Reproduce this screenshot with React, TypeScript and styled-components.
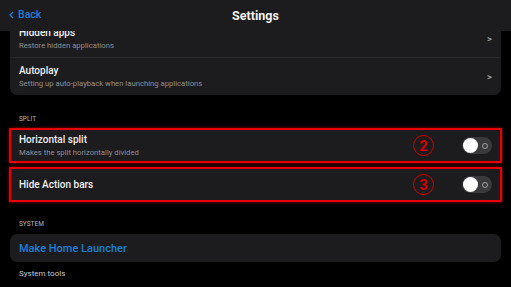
import React from "react";
import styled, { createGlobalStyle } from "styled-components";

const Global = createGlobalStyle`
    html, body {
        margin: 0;
        padding: 0;
        background: #000;
        font-family: Roboto, "Liberation Sans", sans-serif;
        -webkit-font-smoothing: antialiased;
    }
`

const Page = styled.div`
    width: 511px;
    height: 287px;
    overflow: hidden;
    position: relative;
    background: #000;
`

const Header = styled.header`
    position: absolute;
    top: 0;
    left: 0;
    right: 0;
    height: 31px;
    background: #1c1c1e;
    display: flex;
    align-items: center;
    justify-content: center;
    z-index: 2;
`

const Back = styled.span`
    position: absolute;
    left: 9px;
    top: 8px;
    color: #1a7fd8;
    font-size: 10.5px;
    font-weight: 500;
    display: flex;
    align-items: center;
    gap: 4px;
`

const Title = styled.h1`
    margin: 0;
    color: #f2f2f2;
    font-size: 12.5px;
    font-weight: 700;
`

const Content = styled.main`
    padding: 19px 10px 0 10px;
    display: flex;
    flex-direction: column;
`

const Card = styled.section`
    background: #1c1c1e;
    border-radius: 7px;
    display: flex;
    flex-direction: column;
    overflow: hidden;
`

const Row = styled.div<{ $h?: number }>`
    height: ${p => p.$h || 38}px;
    box-sizing: border-box;
    padding: 0 9px;
    display: flex;
    align-items: center;
    justify-content: space-between;
    & + & {
        border-top: 1px solid #2a2a2d;
    }
`

const Texts = styled.div`
    display: flex;
    flex-direction: column;
    gap: 2px;
`

const RowTitle = styled.span<{ $blue?: boolean }>`
    color: ${p => p.$blue ? "#1a7fd8" : "#f0f0f0"};
    font-size: ${p => p.$blue ? 11 : 10}px;
    font-weight: 500;
    line-height: 13px;
`

const RowSub = styled.span`
    color: #8e8e93;
    font-size: 7.7px;
    line-height: 10px;
`

const Chevron = styled.span`
    color: #a0a0a4;
    font-size: 9.5px;
    font-weight: 700;
    margin-right: 0;
`

const SectionLabel = styled.div`
    color: #b8b8bc;
    font-size: 6.5px;
    text-transform: uppercase;
    padding: 0 9px;
    line-height: 10px;
`

const Marked = styled.div`
    border: 2px solid #e80000;
    box-shadow: 0 0 3px rgba(255, 0, 0, 0.6);
    background: #1c1c1e;
    margin: 0 -1px;
    height: 35px;
    box-sizing: border-box;
    display: flex;
    align-items: center;
    justify-content: space-between;
    padding: 0 8px;
`

const Right = styled.div`
    display: flex;
    align-items: center;
`

const Badge = styled.span`
    width: 19px;
    height: 19px;
    border: 1.3px solid #d40000;
    border-radius: 50%;
    color: #d40000;
    font-size: 15px;
    font-weight: 700;
    display: flex;
    align-items: center;
    justify-content: center;
    margin-right: 28px;
`

const Track = styled.div`
    width: 30px;
    height: 17px;
    border-radius: 9px;
    background: #3a3a3d;
    display: flex;
    align-items: center;
    justify-content: space-between;
    padding: 0 4px 0 1px;
    box-sizing: border-box;
`

const Knob = styled.div`
    width: 15px;
    height: 15px;
    border-radius: 50%;
    background: #fff;
`

const OffMark = styled.div`
    width: 4px;
    height: 4px;
    border-radius: 50%;
    border: 1px solid #a0a0a4;
`

const Footer = styled.div`
    color: #c8c8cc;
    font-size: 8px;
    padding: 0 9px;
    margin-top: 7px;
    line-height: 10px;
`

const Toggle: React.FC = () => (
    <Track>
        <Knob />
        <OffMark />
    </Track>
)

const App: React.FC = () => {
    const marked = [
        { title: "Horizontal split", sub: "Makes the split horizontally divided", num: "2" },
        { title: "Hide Action bars", sub: "", num: "3" },
    ]

    return (
        <Page>
            <Global />
            <Header>
                <Back>
                    <svg width="5" height="8" viewBox="0 0 5 8">
                        <path d="M4 1 L1 4 L4 7" stroke="#1a7fd8" strokeWidth="1.3" fill="none" />
                    </svg>
                    Back
                </Back>
                <Title>Settings</Title>
            </Header>
            <Content>
                <Card>
                    <Row>
                        <Texts>
                            <RowTitle>Hidden apps</RowTitle>
                            <RowSub>Restore hidden applications</RowSub>
                        </Texts>
                        <Chevron>&gt;</Chevron>
                    </Row>
                    <Row>
                        <Texts>
                            <RowTitle>Autoplay</RowTitle>
                            <RowSub>Setting up auto-playback when launching applications</RowSub>
                        </Texts>
                        <Chevron>&gt;</Chevron>
                    </Row>
                </Card>
                <SectionLabel style={{ marginTop: 19, marginBottom: 4 }}>Split</SectionLabel>
                {marked.map((item, index) => (
                    <Marked key={index} style={{ marginTop: index ? 4 : 0 }}>
                        <Texts>
                            <RowTitle>{item.title}</RowTitle>
                            {item.sub && <RowSub>{item.sub}</RowSub>}
                        </Texts>
                        <Right>
                            <Badge>{item.num}</Badge>
                            <Toggle />
                        </Right>
                    </Marked>
                ))}
                <SectionLabel style={{ marginTop: 17, marginBottom: 5 }}>System</SectionLabel>
                <Card>
                    <Row $h={28}>
                        <RowTitle $blue>Make Home Launcher</RowTitle>
                    </Row>
                </Card>
                <Footer>System tools</Footer>
            </Content>
        </Page>
    )
}

export default App;
